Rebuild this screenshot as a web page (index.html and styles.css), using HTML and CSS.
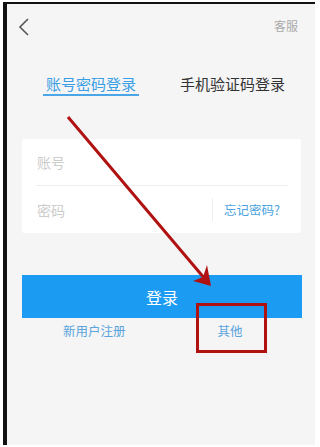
FILE: index.html
```html
<!DOCTYPE html>
<html lang="zh">
<head>
<meta charset="utf-8">
<link rel="stylesheet" href="styles.css">
</head>
<body>
<div class="frame">
  <div class="header">
    <svg class="back" width="12" height="18" viewBox="0 0 12 18"><polyline points="10,1 2,9 10,17" fill="none" stroke="#555" stroke-width="1.6"/></svg>
    <span class="service">客服</span>
  </div>
  <div class="tabs">
    <span class="tab active">账号密码登录</span>
    <span class="tab">手机验证码登录</span>
  </div>
  <div class="card">
    <div class="row first"><span class="ph">账号</span></div>
    <div class="row"><span class="ph grow">密码</span><span class="vline"></span><span class="forgot">忘记密码?</span></div>
  </div>
  <div class="btn">登录</div>
  <div class="links">
    <span class="link reg">新用户注册</span>
    <span class="link other">其他</span>
  </div>
</div>
<svg class="annot" width="320" height="447" viewBox="0 0 320 447">
  <line x1="68" y1="117" x2="205" y2="279" stroke="#b01212" stroke-width="3"/>
  <polygon points="211,286 193,281 203,277 207,265" fill="#b01212"/>
  <rect x="197.5" y="304.5" width="68" height="47" fill="none" stroke="#b01212" stroke-width="3"/>
</svg>
</body>
</html>
```
FILE: styles.css
```css
html, body { margin: 0; padding: 0; background: #fff; }
body { width: 320px; height: 447px; overflow: hidden; position: relative;
  font-family: "Noto Sans CJK SC", "Noto Sans", sans-serif; }
.frame { margin: 2px 0 0 3px; width: 308px; height: 441px; border-top: 2px solid #111; border-left: 4px solid #111; background: #f5f5f5; }
.header { height: 36px; display: flex; align-items: flex-start; justify-content: space-between; padding: 0 17px 0 11px; box-sizing: border-box; }
.back { margin-top: 14px; }
.service { margin-top: 14px; font-size: 12px; line-height: 16px; color: #aaa; }
.tabs { display: flex; padding: 34px 0 0 36px; }
.tab { font-size: 15px; line-height: 20px; color: #333; padding: 0 3px; border-bottom: 2px solid transparent; }
.tab.active { color: #3a9ee4; border-bottom-color: #4aa6e6; }
.tab + .tab { margin-left: 38px; }
.card { margin: 43px 0 0 15px; width: 279px; background: #fff; border-radius: 2px; }
.row { height: 47px; display: flex; align-items: center; margin: 0 13px 0 14px; }
.row.first { border-bottom: 1px solid #eee; height: 46px; }
.ph { font-size: 14px; color: #ccc; padding-left: 1px; }
.grow { flex: 1; }
.vline { width: 1px; height: 23px; background: #eee; margin-right: 11px; }
.forgot { font-size: 12.5px; color: #4aa3e0; margin-right: 8px; }
.btn { margin: 42px 0 0 15px; width: 280px; height: 43px; background: #1c9bf2; color: #fff; font-size: 16px; display: flex; align-items: center; justify-content: center; }
.links { display: flex; padding-left: 56px; height: 24px; align-items: center; }
.link { font-size: 12.5px; color: #5aa4dc; }
.other { margin-left: 92px; }
.annot { position: absolute; left: 0; top: 0; }
```
